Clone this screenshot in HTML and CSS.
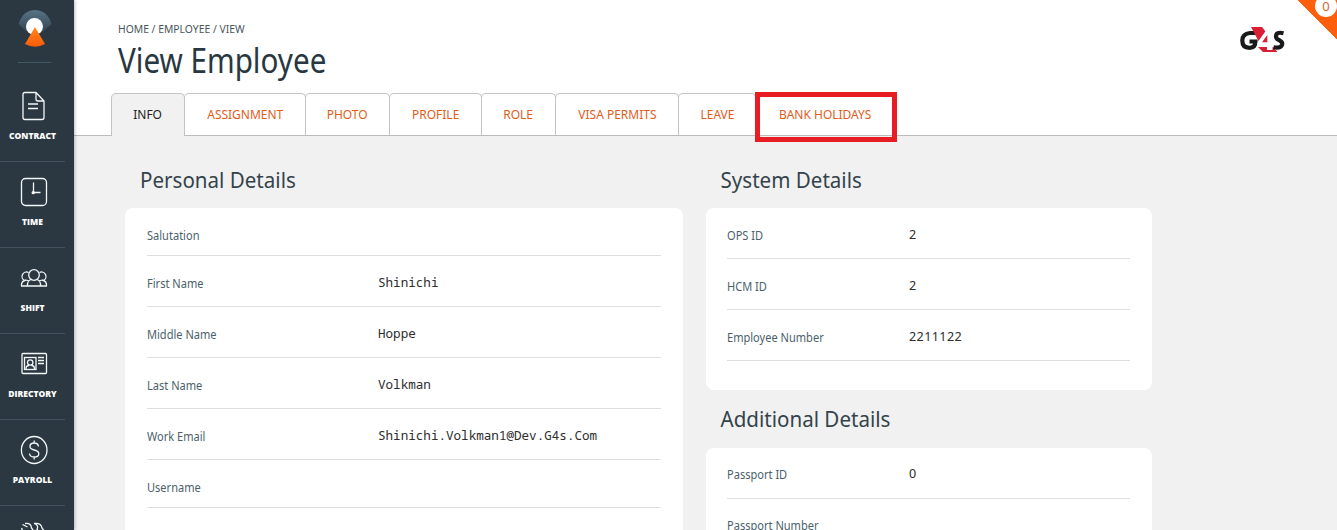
FILE: index.html
```html
<!DOCTYPE html>
<html lang="en">
<head>
<meta charset="utf-8">
<title>View Employee</title>
<link rel="stylesheet" href="styles.css">
</head>
<body>
<div class="app">
  <nav class="sidebar">
    <div class="brand">
      <svg width="34" height="40" viewBox="0 0 34 40">
        <defs>
          <linearGradient id="arc" x1="0" y1="0" x2="0" y2="1"><stop offset="0" stop-color="#587386"/><stop offset="1" stop-color="#30434f"/></linearGradient>
          <linearGradient id="cone" x1="0" y1="0" x2="0" y2="1"><stop offset="0" stop-color="#ff8a1f"/><stop offset="1" stop-color="#fa5a08"/></linearGradient>
        </defs>
        <path d="M0.500 15Q5 1 17 1Q29 1 33.500 15L26 22Q17 26 8 22Z" fill="url(#arc)"/>
        <circle cx="16.500" cy="17.500" r="8.500" fill="#fff"/>
        <path d="M17 18L27 35Q17 40.500 7 35Z" fill="url(#cone)"/>
      </svg>
    </div>
    <a class="nav-item"><svg class="icon" width="28" height="32" viewBox="0 0 28 32"><path d="M5 2.500H16L24 11V27.500Q24 29.500 22 29.500H5Q3 29.500 3 27.500V4.500Q3 2.500 5 2.500ZM16 2.500V9Q16 11 18 11H24M8 14H18M8 18.500H18"/></svg><span class="nav-label">CONTRACT</span></a>
    <a class="nav-item"><svg class="icon" width="28" height="32" viewBox="0 0 28 32"><rect x="1.500" y="2.500" width="25" height="27" rx="4"/><path d="M13.500 6.500V17M13.500 16.500H20.500"/><circle cx="13.200" cy="16.700" r="1" fill="#fff"/></svg><span class="nav-label">TIME</span></a>
    <a class="nav-item"><svg class="icon" width="28" height="32" viewBox="0 0 28 32"><circle cx="14" cy="13" r="5.300"/><path d="M8.500 10.500A4.200 4.200 0 0 0 4.500 18.500M19.500 10.500A4.200 4.200 0 0 1 23.500 18.500M7.500 24Q7 19 11 17.500M20.500 24Q21 19 17 17.500M1.500 24Q1 19 6 18M26.500 24Q27 19 22 18M1 24H27M6 18L9 19M22 18L19 19"/></svg><span class="nav-label">SHIFT</span></a>
    <a class="nav-item"><svg class="icon" width="28" height="32" viewBox="0 0 28 32"><rect x="2" y="5.500" width="24.500" height="20" rx="1"/><rect x="4.500" y="9.500" width="11.500" height="12"/><circle cx="10.200" cy="14.500" r="2.700"/><path d="M6 21Q6 17.500 9 17.500M14.500 21Q14.500 17.500 11.500 17.500M18 9.500H24M18 12.500H24M18 15.500H24"/></svg><span class="nav-label">DIRECTORY</span></a>
    <a class="nav-item"><svg class="icon" width="28" height="32" viewBox="0 0 28 32"><ellipse cx="14.200" cy="16" rx="12.800" ry="13.500"/><path d="M18.500 12.500Q18 9 14.200 9Q10 9 10 12.500Q10 15 14.200 16Q18.800 17 18.800 19.700Q18.800 23 14.200 23Q9.800 23 9.500 19.500M14.200 6.500V9M14.200 23V25.500"/></svg><span class="nav-label">PAYROLL</span></a>
    <a class="nav-item"><svg class="icon" width="28" height="32" viewBox="0 0 28 32"><path d="M1.500 8L3 11H7.500L19 25M2.500 4.500L7.500 7M5 3.500Q11 2.500 11.500 8L15 12.500M14 3.500Q19 5 17 9.500L20 13M14 3.500Q21 2.500 22 8L25 12"/></svg></a>
  </nav>
  <main class="main">
    <header class="header">
      <div class="titles">
        <div class="crumbs">HOME / EMPLOYEE / VIEW</div>
        <h1 class="title">View Employee</h1>
      </div>
      <svg class="company" width="46" height="28" viewBox="0 0 46 28">
        <path d="M16.500 8H10Q2.300 9 2.300 15.500Q2.300 22.800 9.500 22.800Q15.500 22.800 15.500 16.500H9.500" fill="none" stroke="#191919" stroke-width="4.200"/>
        <path d="M11 2H22L25.500 6.500L18.500 16Z" fill="#d81f35"/>
        <path d="M18 22H33L37.500 27H23Z" fill="#d81f35"/>
        <path d="M26.500 5H32.500V17H35.500V21.500H32.500V25H27V21.500H17.500V18Z" fill="#fff"/>
        <path d="M22 17.200L27.300 10V17.200Z" fill="#d81f35"/>
        <path d="M43.500 8.200Q36 6.500 36 11.500Q36 14 39.500 15.300Q43 17 42 20Q40.500 23.700 33.500 22.300" fill="none" stroke="#191919" stroke-width="4.200"/>
      </svg>
    </header>
    <div class="tabs">
      <a class="tab tab-info active"><span>INFO</span></a>
      <a class="tab tab-assignment"><span>ASSIGNMENT</span></a>
      <a class="tab tab-photo"><span>PHOTO</span></a>
      <a class="tab tab-profile"><span>PROFILE</span></a>
      <a class="tab tab-role"><span>ROLE</span></a>
      <a class="tab tab-visa"><span>VISA PERMITS</span></a>
      <a class="tab tab-leave"><span>LEAVE</span></a>
      <a class="tab tab-bank"><span>BANK HOLIDAYS</span><i class="highlight"></i></a>
    </div>
    <div class="content">
      <section class="personal">
        <h2 class="heading">Personal Details</h2>
        <div class="card">
          <div class="row short"><span class="label">Salutation</span></div>
          <div class="row"><span class="label">First Name</span><span class="value">Shinichi</span></div>
          <div class="row"><span class="label">Middle Name</span><span class="value">Hoppe</span></div>
          <div class="row"><span class="label">Last Name</span><span class="value">Volkman</span></div>
          <div class="row"><span class="label">Work Email</span><span class="value">Shinichi.Volkman1@Dev.G4s.Com</span></div>
          <div class="row short"><span class="label">Username</span></div>
        </div>
      </section>
      <div class="system">
        <section>
          <h2 class="heading">System Details</h2>
          <div class="card ids">
            <div class="row"><span class="label">OPS ID</span><span class="value number">2</span></div>
            <div class="row"><span class="label">HCM ID</span><span class="value number">2</span></div>
            <div class="row"><span class="label">Employee Number</span><span class="value number">2211122</span></div>
          </div>
        </section>
        <section>
          <h2 class="heading second">Additional Details</h2>
          <div class="card additional">
            <div class="row"><span class="label">Passport ID</span><span class="value number">0</span></div>
            <div class="row"><span class="label">Passport Number</span></div>
          </div>
        </section>
      </div>
    </div>
  </main>
  <div class="corner"><span class="count">0</span></div>
</div>
</body>
</html>
```
FILE: styles.css
```css
* { box-sizing: border-box; }
body { margin: 0; font-family: "Noto Sans", sans-serif; background: #f1f1f1; color: #2b3a42; overflow: hidden; }
.app { position: relative; display: flex; height: 530px; overflow: hidden; }

.sidebar { width: 74px; flex: none; background: #2b3841; box-shadow: 1px 0 3px rgba(0,0,0,.25); z-index: 1; }
.brand { height: 63px; margin: 0 23px 0 18px; padding-top: 9px; border-bottom: 1px solid #455963; }
.brand svg { display: block; }
.nav-item { display: flex; flex-direction: column; align-items: center; width: 65px; height: 86px; padding-top: 14px; border-bottom: 1px solid #43535d; }
.brand + .nav-item { height: 99px; padding-top: 27px; }
.icon { display: block; flex: none; margin-left: 3px; fill: none; stroke: #f4f7f8; stroke-width: 1.3; }
.nav-label { margin-top: 7px; font: 800 8.5px/14px "Open Sans", sans-serif; color: #fff; white-space: nowrap; }

.main { flex: 1; min-width: 0; }
.header { display: flex; justify-content: space-between; height: 93px; padding: 22px 51px 0 44px; background: #fff; }
.crumbs { font-size: 11.5px; line-height: 14px; color: #4a575e; white-space: nowrap; transform: scaleX(.901); transform-origin: 0 0; }
.title { margin: 3px 0 0; font-size: 34px; font-weight: 400; line-height: 42px; color: #283740; white-space: nowrap; transform: scaleX(.871); transform-origin: 0 0; }
.company { flex: none; margin-top: 3px; }

.tabs { display: flex; height: 43px; padding-left: 37px; background: #fff; border-bottom: 1px solid #bcbcbc; }
.tab { position: relative; flex: none; height: 42px; display: flex; justify-content: center; border: 1px solid #c4c4c4; border-bottom: 0; border-radius: 5px 5px 0 0; margin-right: -1px; font-size: 13px; line-height: 41px; color: #e25c1a; white-space: nowrap; }
.tab span { transform: scaleX(.922); }
.active { height: 43px; background: #f1f1f1; color: #222; }
.tab-info { width: 74px; }
.tab-assignment { width: 122px; }
.tab-photo { width: 85px; }
.tab-profile { width: 93px; }
.tab-role { width: 75px; }
.tab-visa { width: 124px; }
.tab-leave { width: 78px; }
.tab-bank { width: 141px; }
.highlight { position: absolute; left: -1px; top: -2px; width: 142px; height: 50px; border: 5px solid #e81c23; }

.content { display: flex; gap: 23px; padding-left: 51px; }
.personal { width: 558px; }
.system { width: 446px; }
.heading { margin: 0; height: 72px; padding: 28px 0 0 15px; font-size: 22px; font-weight: 400; line-height: 30px; color: #34434b; white-space: nowrap; transform: scaleX(.935); transform-origin: 15px 0; }
.system .heading { padding-left: 14.5px; }
.system .second { height: 58px; padding-top: 13px; }
.card { padding: 0 22px 0 21px; background: #fff; border-radius: 8px; }
.personal .card { padding: 0 22px; height: 380px; }
.ids { height: 182px; }
.row { display: grid; grid-template-columns: 182px 1fr; height: 51px; padding-top: 18px; border-bottom: 1px solid #dedede; line-height: 18px; }
.additional .row { padding-top: 17px; }
.personal .row { grid-template-columns: 231px 1fr; }
.personal .short { height: 48px; }
.label { font-size: 13px; color: #4b5f6b; white-space: nowrap; transform: scaleX(.85); transform-origin: 0 0; }
.value { font-family: "Noto Sans Mono", "DejaVu Sans Mono", monospace; font-size: 12.6px; color: #2c2c2c; }
.number { font-family: "Noto Sans", sans-serif; font-size: 12.6px; line-height: 18px; letter-spacing: .38px; }

.corner { position: absolute; z-index: 2; right: 0; top: 0; width: 40px; height: 40px; background: linear-gradient(45deg, transparent 50%, #ff5f0a 50.5%); overflow: hidden; }
.count { position: absolute; left: 18px; top: -5px; width: 22px; height: 22px; border-radius: 50%; background: #fff; color: #e0642d; font-size: 13px; line-height: 22px; text-align: center; }
```
